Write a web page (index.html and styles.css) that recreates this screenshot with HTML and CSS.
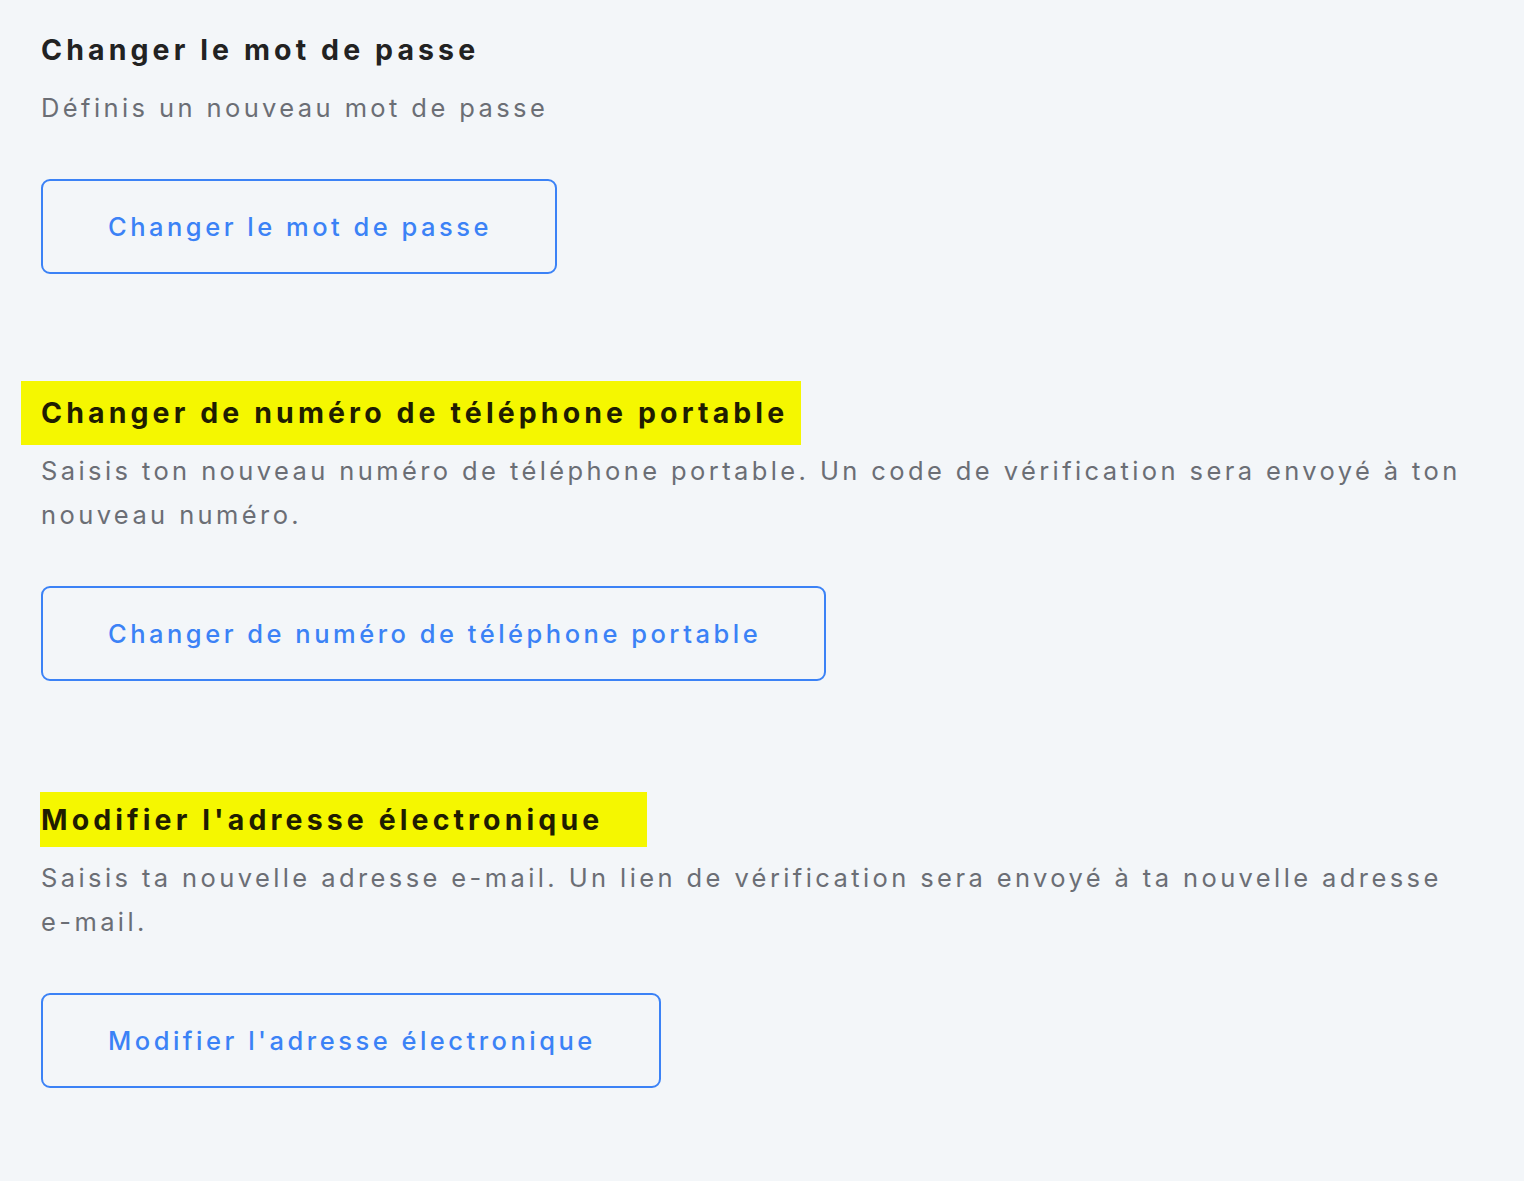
FILE: index.html
```html
<!DOCTYPE html>
<html lang="fr">
<head>
<meta charset="utf-8">
<title>Paramètres du compte</title>
<link rel="stylesheet" href="styles.css">
</head>
<body>
<main class="page">
  <section class="block">
    <h2 class="title"><span class="title-text">Changer le mot de passe</span></h2>
    <p class="desc">Définis un nouveau mot de passe</p>
    <button class="btn" type="button">Changer le mot de passe</button>
  </section>
  <section class="block">
    <h2 class="title"><span class="title-text mark mark-phone">Changer de numéro de téléphone portable</span></h2>
    <p class="desc">Saisis ton nouveau numéro de téléphone portable. Un code de vérification sera envoyé à ton nouveau numéro.</p>
    <button class="btn" type="button">Changer de numéro de téléphone portable</button>
  </section>
  <section class="block">
    <h2 class="title"><span class="title-text mark mark-mail">Modifier l'adresse électronique</span></h2>
    <p class="desc">Saisis ta nouvelle adresse e-mail. Un lien de vérification sera envoyé à ta nouvelle adresse e-mail.</p>
    <button class="btn" type="button">Modifier l'adresse électronique</button>
  </section>
</main>
</body>
</html>
```
FILE: styles.css
```css
html, body {
  margin: 0;
  padding: 0;
  background: #f3f6f9;
}
body {
  font-family: Inter, "Open Sans", "Liberation Sans", sans-serif;
  color: #222222;
}
.page {
  padding: 28px 41px 40px 41px;
  display: flex;
  flex-direction: column;
  gap: 117px;
}
.block {
  display: flex;
  flex-direction: column;
  align-items: flex-start;
}
.title {
  margin: 0;
  font-size: 28.5px;
  line-height: 44px;
  font-weight: 700;
  letter-spacing: 4.1px;
  color: #222222;
}
.title-text {
  display: inline-block;
}
.mark {
  background: #f5f700;
  color: #1f1d00;
}
.mark-phone {
  padding: 10px 13px 10px 20px;
  margin: -10px -13px -10px -20px;
}
.mark-mail {
  padding: 6px 44px 5px 1px;
  margin: -6px -44px -5px -1px;
}
.desc {
  margin: 14px 0 0 0;
  font-size: 25.5px;
  line-height: 44px;
  letter-spacing: 3.4px;
  color: #6b6e75;
}
.btn {
  margin-top: 49px;
  height: 95px;
  padding: 0 63px 0 65px;
  border: 2px solid #3b82f6;
  border-radius: 9px;
  background: transparent;
  color: #3b82f6;
  font-family: inherit;
  font-size: 25.5px;
  font-weight: 500;
  letter-spacing: 3.5px;
  cursor: pointer;
}
```
